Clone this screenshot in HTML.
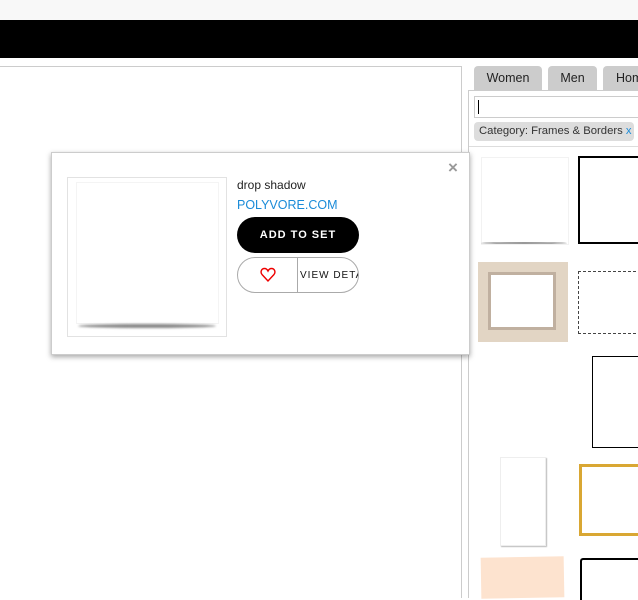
<!DOCTYPE html><html><head><style>
body{margin:0;width:638px;height:598px;overflow:hidden;background:#fff;font-family:"Liberation Sans",Arial,sans-serif;position:relative}
.a{position:absolute}
</style></head><body>
<div class="a" style="left:0;top:0;width:638px;height:20px;background:#f8f8f8"></div>
<div class="a" style="left:0;top:20px;width:638px;height:38px;background:#000"></div>
<div class="a" style="left:0;top:66px;width:462px;height:1px;background:#ccc"></div>
<div class="a" style="left:461px;top:66px;width:1px;height:532px;background:#ccc"></div>
<div class="a" style="left:468px;top:90px;width:1px;height:508px;background:#ccc"></div>
<div class="a" style="left:468px;top:90px;width:170px;height:1px;background:#ccc"></div>
<div class="a" style="left:474px;top:66px;width:68px;height:24px;background:#ccc;border-radius:4px 4px 0 0;font-size:12.5px;text-align:center;line-height:24px;color:#222">Women</div>
<div class="a" style="left:548px;top:66px;width:49px;height:24px;background:#ccc;border-radius:4px 4px 0 0;font-size:12.5px;text-align:center;line-height:24px;color:#222">Men</div>
<div class="a" style="left:603px;top:66px;width:40px;height:24px;background:#ccc;border-radius:4px 4px 0 0;font-size:12.5px;line-height:24px;color:#222;padding-left:13px">Home</div>
<div class="a" style="left:474px;top:96px;width:170px;height:20px;border:1px solid #ccc;background:#fff"></div>
<div class="a" style="left:478px;top:100px;width:1px;height:14px;background:#000"></div>
<div class="a" style="left:474px;top:122px;width:155px;height:19px;background:#ddd;border-radius:4px;font-size:11.3px;line-height:19px;color:#333;padding-left:5px;white-space:nowrap">Category: Frames &amp; Borders <span style="color:#1a8bd8">x</span></div>
<div class="a" style="left:469px;top:146px;width:169px;height:1px;background:#ddd"></div>
<div class="a" style="left:481px;top:157px;width:86px;height:86px;border:1px solid #f2f2f2"></div>
<div class="a" style="left:481px;top:242px;width:86px;height:2px;background:#999;border-radius:50%"></div>
<div class="a" style="left:578px;top:156px;width:62px;height:88px;border:2px solid #000;border-right:none;box-sizing:border-box"></div>
<div class="a" style="left:478px;top:262px;width:90px;height:80px;background:#e2d5c4"></div>
<div class="a" style="left:488px;top:272px;width:68px;height:58px;border:3px solid #c0b0a0;background:#fff;box-sizing:border-box"></div>
<div class="a" style="left:578px;top:271px;width:62px;height:61px;border:1px dashed #444;border-right:none"></div>
<div class="a" style="left:592px;top:356px;width:50px;height:90px;border:1px solid #000;border-right:none"></div>
<div class="a" style="left:500px;top:457px;width:44px;height:87px;border:1px solid #eee;box-shadow:1px 1px 1px #bbb"></div>
<div class="a" style="left:579px;top:464px;width:60px;height:72px;border:3px solid #d9a733;border-right:none;box-sizing:border-box"></div>
<div class="a" style="left:481px;top:557px;width:83px;height:41px;background:#fde3cf;transform:rotate(-1deg)"></div>
<div class="a" style="left:580px;top:558px;width:60px;height:40px;border:2px solid #000;border-right:none;border-bottom:none;border-radius:3px 0 0 0"></div>
<div class="a" style="left:51px;top:152px;width:417px;height:201px;background:#fff;border:1px solid #ccc;box-shadow:0 2px 5px rgba(0,0,0,.35)"></div>
<div class="a" style="left:448px;top:158px;font-size:17px;color:#999;font-weight:bold">×</div>
<div class="a" style="left:67px;top:177px;width:158px;height:158px;border:1px solid #e2e2e2"></div>
<div class="a" style="left:76px;top:182px;width:141px;height:140px;border:1px solid #f4f4f4"></div>
<div class="a" style="left:78px;top:324px;width:138px;height:4px;background:#888;border-radius:50%;filter:blur(1px)"></div>
<div class="a" style="left:237px;top:178px;font-size:12px;color:#222">drop shadow</div>
<div class="a" style="left:237px;top:198px;font-size:12.5px;color:#1a8bd8">POLYVORE.COM</div>
<div class="a" style="left:237px;top:217px;width:122px;height:36px;background:#000;border-radius:18px;color:#fff;font-size:11px;font-weight:bold;letter-spacing:1px;text-align:center;line-height:37px">ADD TO SET</div>
<div class="a" style="left:237px;top:257px;width:120px;height:34px;border:1px solid #aaa;border-radius:18px;overflow:hidden">
<div class="a" style="left:59px;top:0;width:1px;height:34px;background:#aaa"></div>
<svg class="a" style="left:22px;top:9px" width="16" height="16" viewBox="0 0 16 16"><path d="M8 14 L2 7.5 C0 5 1.5 1.5 4.5 1.5 C6.3 1.5 7.5 3 8 4 C8.5 3 9.7 1.5 11.5 1.5 C14.5 1.5 16 5 14 7.5 Z" fill="none" stroke="#e00" stroke-width="1.4"/></svg>
<div class="a" style="left:62px;top:12px;font-size:10px;letter-spacing:1px;color:#111;white-space:nowrap">VIEW DETAILS</div>
</div>
</body></html>
